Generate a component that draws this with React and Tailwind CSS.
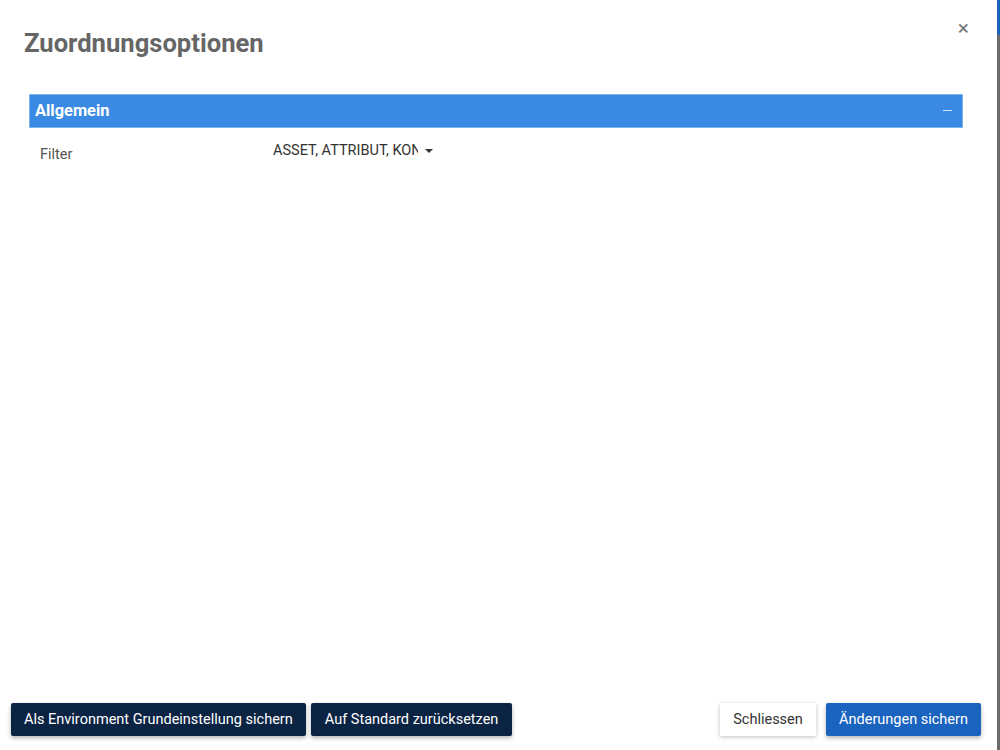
import React from "react";

export default function App() {
  return (
    <div className="flex h-[750px] w-[1000px] bg-[#6b6b6b]" style={{ fontFamily: "Roboto, 'Liberation Sans', sans-serif" }}>
      <div className="relative flex h-full w-[997px] flex-col bg-white">
        <button className="absolute right-[28px] top-[18px] text-[21px] leading-none text-[#777]">×</button>
        <div className="px-6 pt-[28px]">
          <h1 className="text-[25.6px] font-bold leading-[31px] text-[#666]">Zuordnungsoptionen</h1>
        </div>
        <div className="mx-[29px] mt-[35px] w-[934px]">
          <div className="flex h-[34px] items-center justify-between border border-[#7fb3ee] bg-[#3a8ae3] pl-[5px] pr-[10px]">
            <span className="text-[16.4px] font-bold text-white">Allgemein</span>
            <span className="mb-[1px] h-[1px] w-[9px] bg-[#cfe2f8]"></span>
          </div>
          <div className="flex items-start pt-[14px]">
            <div className="w-[244px] pl-[11px] pt-[2px] text-[14.5px] text-[#555]">Filter</div>
            <div className="flex items-center">
              <span className="w-[145px] overflow-hidden whitespace-nowrap text-[14.5px] leading-[17px] text-[#333]">ASSET, ATTRIBUT, KONTEXT</span>
              <span className="ml-[7px] h-0 w-0 border-x-[4px] border-t-[4px] border-x-transparent border-t-[#333]"></span>
            </div>
          </div>
        </div>
        <div className="flex-1"></div>
        <div className="flex items-center justify-between pb-[14px] pl-[11px] pr-[16px]">
          <div className="flex gap-[5px]">
            <button className="h-[33px] rounded-[2px] bg-[#0c2444] px-[13px] text-[14.5px] text-white shadow-[0_2px_4px_rgba(0,0,0,0.3)]">Als Environment Grundeinstellung sichern</button>
            <button className="h-[33px] rounded-[2px] bg-[#0c2444] px-[14px] text-[14.5px] text-white shadow-[0_2px_4px_rgba(0,0,0,0.3)]">Auf Standard zurücksetzen</button>
          </div>
          <div className="flex gap-[10px]">
            <button className="h-[33px] w-[96px] rounded-[2px] bg-white text-[14.5px] text-[#333] shadow-[0_1px_4px_rgba(0,0,0,0.25)]">Schliessen</button>
            <button className="h-[33px] w-[155px] rounded-[2px] bg-[#1a64c0] text-[14.5px] text-white shadow-[0_2px_4px_rgba(0,0,0,0.3)]">Änderungen sichern</button>
          </div>
        </div>
      </div>
      <div className="flex w-[3px] flex-col">
        <div className="h-[35px] bg-[#1a64c0]"></div>
      </div>
    </div>
  );
}
